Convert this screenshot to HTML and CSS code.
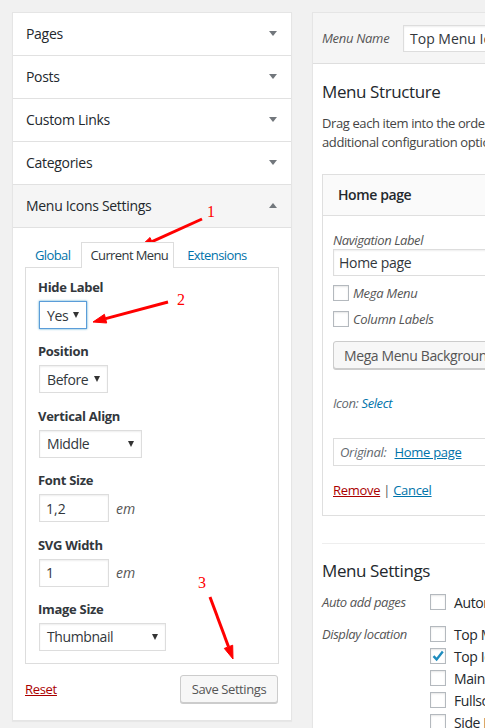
FILE: index.html
```html
<!DOCTYPE html>
<html>
<head>
<meta charset="utf-8">
<link rel="stylesheet" href="styles.css">
</head>
<body>
<div class="page">
  <div class="left">
    <div class="acc-h"><span>Pages</span><i class="tri"></i></div>
    <div class="acc-h"><span>Posts</span><i class="tri"></i></div>
    <div class="acc-h"><span>Custom Links</span><i class="tri"></i></div>
    <div class="acc-h"><span>Categories</span><i class="tri"></i></div>
    <div class="acc-h open"><span>Menu Icons Settings</span><i class="tri up"></i></div>
    <div class="acc-body">
      <div class="tabs">
        <span class="tab">Global</span>
        <span class="tab active">Current Menu</span>
        <span class="tab">Extensions</span>
      </div>
      <div class="tabpanel">
        <div class="field">
          <div class="lbl">Hide Label</div>
          <div class="sel focus w-yes"><span>Yes</span><i class="dd"></i></div>
        </div>
        <div class="field">
          <div class="lbl">Position</div>
          <div class="sel w-before"><span>Before</span><i class="dd"></i></div>
        </div>
        <div class="field">
          <div class="lbl">Vertical Align</div>
          <div class="sel w-middle"><span>Middle</span><i class="dd"></i></div>
        </div>
        <div class="field">
          <div class="lbl">Font Size</div>
          <div class="inrow"><div class="inp">1,2</div><span class="unit">em</span></div>
        </div>
        <div class="field">
          <div class="lbl">SVG Width</div>
          <div class="inrow"><div class="inp">1</div><span class="unit">em</span></div>
        </div>
        <div class="field last">
          <div class="lbl">Image Size</div>
          <div class="sel w-thumb"><span>Thumbnail</span><i class="dd"></i></div>
        </div>
      </div>
      <div class="actions">
        <a class="reset">Reset</a>
        <span class="btn">Save Settings</span>
      </div>
    </div>
  </div>

  <div class="right">
    <div class="rhead">
      <span class="mname">Menu Name</span>
      <div class="mname-inp">Top Menu Icons</div>
    </div>
    <div class="rbody">
      <h3 class="h3 first">Menu Structure</h3>
      <p class="desc">Drag each item into the order you prefer. Click the arrow on the right of the item to reveal<br>additional configuration options.</p>

      <div class="item">
        <div class="item-h">Home page</div>
        <div class="item-b">
          <div class="ilabel">Navigation Label</div>
          <div class="iinp">Home page</div>
          <div class="checks">
            <div class="crow"><i class="cb"></i><span class="clabel">Mega Menu</span></div>
            <div class="crow"><i class="cb"></i><span class="clabel">Column Labels</span></div>
          </div>
          <div class="bigbtn">Mega Menu Background Image</div>
          <div class="iconsel"><span class="muted">Icon:</span> <span class="blue">Select</span></div>
          <div class="orig"><span class="muted">Original:</span><a class="link">Home page</a></div>
          <div class="rc"><a class="remove">Remove</a> <span class="sep">|</span> <a class="link">Cancel</a></div>
        </div>
      </div>

      <div class="settings">
        <h3 class="h3">Menu Settings</h3>
        <div class="srow r1">
          <span class="slabel">Auto add pages</span>
          <div class="sopts"><div class="opt"><i class="cb"></i><span>Automatically add new top-level pages to this menu</span></div></div>
        </div>
        <div class="srow r2">
          <span class="slabel">Display location</span>
          <div class="sopts">
            <div class="opt"><i class="cb"></i><span>Top Menu</span></div>
            <div class="opt"><i class="cb checked"><svg viewBox="0 0 16 16" width="16" height="16"><path d="M3.5 8.2 L6.6 11.4 L12.8 3.6" fill="none" stroke="#1e8cbe" stroke-width="2.4"/></svg></i><span>Top Icons Menu</span></div>
            <div class="opt"><i class="cb"></i><span>Main Menu</span></div>
            <div class="opt"><i class="cb"></i><span>Fullscreen Menu</span></div>
            <div class="opt"><i class="cb"></i><span>Side Menu</span></div>
          </div>
        </div>
      </div>
    </div>
  </div>
</div>

<svg class="notes" width="485" height="728" viewBox="0 0 485 728">
  <g fill="#f00" stroke="#f00">
    <line x1="202" y1="219" x2="152" y2="241.6" stroke-width="3"/>
    <polygon points="140,247 153.8,245.7 150,237.5" stroke-width="1"/>
    <line x1="168" y1="302" x2="105.6" y2="318.6" stroke-width="3"/>
    <polygon points="93,322 106.7,323 104.4,314.3" stroke-width="1"/>
    <line x1="210" y1="597" x2="228.5" y2="646.8" stroke-width="3"/>
    <polygon points="233,659 232.7,645.2 224.3,648.4" stroke-width="1"/>
  </g>
  <g fill="#f00" class="num">
    <text x="207" y="217">1</text>
    <text x="177" y="305">2</text>
    <text x="198" y="588">3</text>
  </g>
</svg>
</body>
</html>
```

FILE: styles.css
```css
* { box-sizing: border-box; }
html, body { margin: 0; padding: 0; }
body {
  width: 485px;
  height: 728px;
  overflow: hidden;
  background: #f1f1f1;
  font-family: "Open Sans", "Noto Sans", sans-serif;
  font-size: 13px;
  color: #23282d;
  position: relative;
}
.page {
  display: flex;
  align-items: flex-start;
  padding: 12px 0 0 12px;
}
.left {
  width: 280px;
  flex: none;
  background: #fff;
  border: 1px solid #e5e5e5;
  box-shadow: 0 1px 1px rgba(0,0,0,.04);
}
.acc-h {
  height: 43px;
  border-bottom: 1px solid #e1e1e1;
  display: flex;
  align-items: center;
  justify-content: space-between;
  padding: 0 14px 1px 13px;
  font-size: 14px;
  letter-spacing: -0.3px;
  color: #23282d;
}
.acc-h.open { background: #f5f5f5; }
.tri {
  width: 0; height: 0;
  border-left: 4px solid transparent;
  border-right: 4px solid transparent;
  border-top: 5px solid #72777c;
}
.tri.up { border-top: 0; border-bottom: 5px solid #72777c; }

.acc-body { padding: 14px 12px 17px 12px; }
.tabs {
  display: flex;
  align-items: flex-end;
  margin-bottom: -1px;
  position: relative;
  z-index: 1;
}
.tab {
  padding: 0 9px;
  line-height: 25px;
  color: #0073aa;
  letter-spacing: -0.6px;
  border: 1px solid transparent;
  border-bottom: 0;
}
.tab.active {
  color: #32373c;
  background: #fff;
  border-color: #ddd;
  padding: 0 5px 0 8px;
  margin: 0 3px 0 1px;
}
.tabpanel {
  border: 1px solid #ddd;
  padding: 9px 12px 0 12px;
  background: #fff;
}
.field { margin-bottom: 12.4px; }
.lbl {
  font-weight: 700;
  font-size: 13px;
  line-height: 20px;
  margin-bottom: 4px;
  letter-spacing: -0.3px;
  color: #32373c;
}
.sel {
  height: 28px;
  border: 1px solid #ddd;
  background: #fff;
  box-shadow: inset 0 1px 2px rgba(0,0,0,.07);
  display: flex;
  align-items: center;
  justify-content: space-between;
  padding: 0 7px 0 7px;
  font-size: 14px;
  letter-spacing: -0.4px;
  color: #32373c;
  margin-left: 1px;
}
.sel.focus {
  border-color: #5b9dd9;
  box-shadow: 0 0 2px rgba(30,140,190,.8);
}
.dd {
  width: 0; height: 0;
  border-left: 3px solid transparent;
  border-right: 3px solid transparent;
  border-top: 6px solid #333;
}
.w-yes { width: 48px; }
.w-before { width: 69px; }
.w-middle { width: 103px; }
.w-thumb { width: 127px; }
.inrow { display: flex; align-items: center; margin-left: 1px; }
.inp {
  width: 70px;
  height: 28px;
  border: 1px solid #ddd;
  box-shadow: inset 0 1px 2px rgba(0,0,0,.07);
  padding: 0 6px;
  display: flex;
  align-items: center;
  font-size: 14px;
  color: #32373c;
}
.unit {
  margin-left: 7px;
  font-style: italic;
  font-size: 14px;
  color: #555;
}
.actions {
  display: flex;
  justify-content: space-between;
  align-items: center;
  margin-top: 11px;
}
.reset {
  color: #a00;
  text-decoration: underline;
  letter-spacing: -0.3px;
}
.btn {
  height: 28px;
  width: 98px;
  margin-right: 1px;
  display: flex;
  align-items: center;
  justify-content: center;
  background: #f7f7f7;
  border: 1px solid #ccc;
  border-radius: 3px;
  box-shadow: 0 1px 0 #ccc;
  color: #555;
  letter-spacing: -0.4px;
}

.right {
  margin-left: 20px;
  width: 420px;
  flex: none;
  background: #fff;
  border: 1px solid #e5e5e5;
  box-shadow: 0 1px 1px rgba(0,0,0,.04);
  height: 740px;
}
.rhead {
  height: 51px;
  background: #f5f5f5;
  border-bottom: 1px solid #dedede;
  display: flex;
  align-items: center;
  padding: 0 0 0 9px;
}
.mname {
  width: 81px;
  font-style: italic;
  color: #555;
  letter-spacing: -0.3px;
}
.mname-inp {
  flex: 1;
  height: 27px;
  border: 1px solid #ddd;
  background: #fff;
  box-shadow: inset 0 1px 2px rgba(0,0,0,.07);
  padding: 0 6px;
  display: flex;
  align-items: center;
  font-size: 14px;
  white-space: nowrap;
  overflow: hidden;
  color: #32373c;
}
.rbody { padding: 0 0 0 9px; }
.h3 {
  margin: 0;
  font-size: 17px;
  font-weight: 400;
  line-height: 24px;
  letter-spacing: -0.4px;
  color: #23282d;
}
.h3.first { margin-top: 16px; }
.desc {
  margin: 10px 0 0 0;
  line-height: 19px;
  white-space: nowrap;
  color: #444;
  letter-spacing: -0.4px;
}
.item {
  margin-top: 22px;
  border: 1px solid #dfdfdf;
  width: 400px;
}
.item-h {
  height: 41px;
  background: #fafafa;
  border-bottom: 1px solid #dfdfdf;
  display: flex;
  align-items: center;
  padding: 0 0 1px 15px;
  font-weight: 600;
  font-size: 14px;
  letter-spacing: -0.4px;
}
.item-b { padding: 15px 0 15px 10px; }
.ilabel {
  font-style: italic;
  color: #555;
  line-height: 18px;
  letter-spacing: -0.4px;
}
.iinp {
  height: 27px;
  border: 1px solid #ddd;
  box-shadow: inset 0 1px 2px rgba(0,0,0,.07);
  padding: 0 5px;
  display: flex;
  align-items: center;
  font-size: 14px;
  letter-spacing: -0.3px;
  color: #32373c;
}
.checks {
  display: flex;
  flex-direction: column;
  gap: 10px;
  margin-top: 9px;
}
.crow { display: flex; align-items: center; height: 16px; }
.cb {
  width: 16px;
  height: 16px;
  flex: none;
  border: 1px solid #b4b9be;
  background: #fff;
  box-shadow: inset 0 1px 2px rgba(0,0,0,.1);
  display: block;
  position: relative;
}
.cb svg { position: absolute; left: -1px; top: -1px; }
.clabel {
  margin-left: 4px;
  font-style: italic;
  color: #555;
  letter-spacing: -0.3px;
}
.bigbtn {
  margin-top: 14px;
  height: 28px;
  background: #f7f7f7;
  border: 1px solid #ccc;
  border-radius: 3px;
  box-shadow: 0 1px 0 #ccc;
  display: flex;
  align-items: center;
  padding-left: 10px;
  font-size: 14px;
  color: #555;
  letter-spacing: -0.4px;
  white-space: nowrap;
}
.iconsel {
  margin-top: 24px;
  line-height: 20px;
  font-style: italic;
  letter-spacing: -0.4px;
}
.muted { color: #646970; font-style: italic; }
.blue { color: #0073aa; }
.orig {
  margin-top: 25px;
  height: 28px;
  border: 1px solid #ddd;
  display: flex;
  align-items: center;
  padding-left: 6px;
  letter-spacing: -0.3px;
}
.orig .link { margin-left: 8px; }
.link { color: #0073aa; text-decoration: underline; }
.rc {
  margin-top: 14px;
  line-height: 20px;
  letter-spacing: -0.3px;
}
.remove { color: #a00; text-decoration: underline; }
.sep { color: #555; }
.settings {
  margin-top: 27px;
  border-top: 1px solid #eee;
  padding-top: 15px;
}
.srow { display: flex; align-items: flex-start; }
.r1 { margin-top: 11px; }
.r2 { margin-top: 16px; }
.slabel {
  width: 108px;
  flex: none;
  font-style: italic;
  color: #555;
  line-height: 16px;
  letter-spacing: -0.4px;
}
.sopts { display: flex; flex-direction: column; gap: 6px; }
.opt {
  display: flex;
  align-items: center;
  height: 16px;
  white-space: nowrap;
  font-size: 14px;
  letter-spacing: -0.4px;
}
.opt span { margin-left: 8px; }
.notes {
  position: absolute;
  left: 0;
  top: 0;
  pointer-events: none;
}
.num text {
  font-family: "Liberation Serif", serif;
  font-size: 16px;
}
```
